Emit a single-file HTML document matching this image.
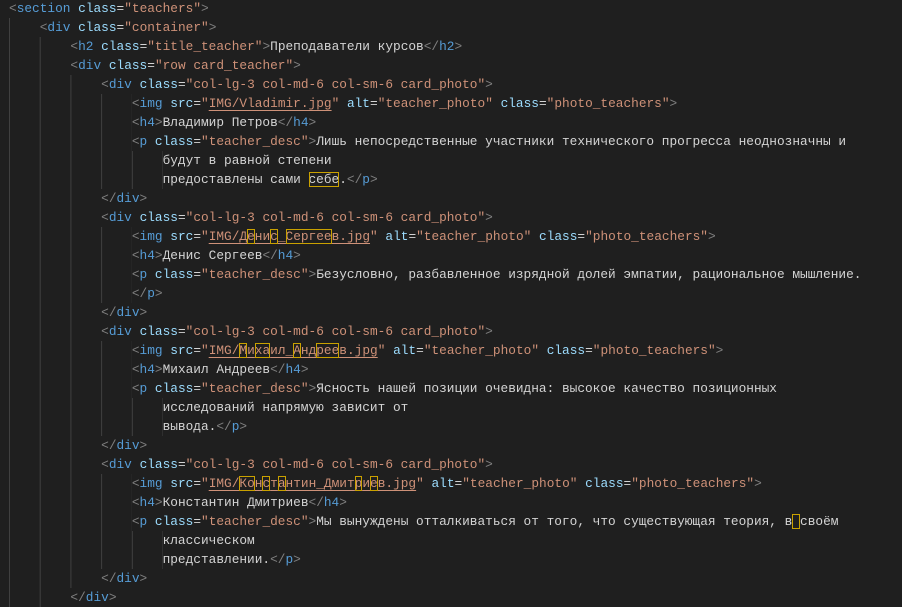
<!DOCTYPE html>
<html><head><meta charset="utf-8">
<style>
html,body{margin:0;padding:0;background:#1f1f1f;width:902px;height:594px;overflow:hidden}
#ed{position:absolute;left:9px;top:-1px;font-family:"Liberation Mono","DejaVu Sans Mono",monospace;font-size:12.8px;color:#d4d4d4;white-space:normal}
.l{height:19px;line-height:19px;position:relative;white-space:pre}
.g{display:inline-block;height:19px;vertical-align:top;background-image:linear-gradient(to right,#404040 0,#404040 1px,transparent 1px);background-size:4ch 19px;background-repeat:repeat-x;background-position:0 0}
.p{color:#808080}.t{color:#569cd6}.a{color:#9cdcfe}.s{color:#ce9178}
.u{text-decoration:underline;text-decoration-color:#ce9178;text-underline-offset:3px}
.b{outline:1px solid #c9a100;outline-offset:-1px}
</style></head><body>
<div id="ed"><div class="l"><span class="p">&lt;</span><span class="t">section</span> <span class="a">class</span>=<span class="s">"teachers"</span><span class="p">&gt;</span></div><div class="l"><span class="g" style="width:4ch"></span><span class="p">&lt;</span><span class="t">div</span> <span class="a">class</span>=<span class="s">"container"</span><span class="p">&gt;</span></div><div class="l"><span class="g" style="width:8ch"></span><span class="p">&lt;</span><span class="t">h2</span> <span class="a">class</span>=<span class="s">"title_teacher"</span><span class="p">&gt;</span>Преподаватели курсов<span class="p">&lt;/</span><span class="t">h2</span><span class="p">&gt;</span></div><div class="l"><span class="g" style="width:8ch"></span><span class="p">&lt;</span><span class="t">div</span> <span class="a">class</span>=<span class="s">"row card_teacher"</span><span class="p">&gt;</span></div><div class="l"><span class="g" style="width:12ch"></span><span class="p">&lt;</span><span class="t">div</span> <span class="a">class</span>=<span class="s">"col-lg-3 col-md-6 col-sm-6 card_photo"</span><span class="p">&gt;</span></div><div class="l"><span class="g" style="width:16ch"></span><span class="p">&lt;</span><span class="t">img</span> <span class="a">src</span>=<span class="s">"<span class="u">IMG/Vladimir.jpg</span>"</span> <span class="a">alt</span>=<span class="s">"teacher_photo"</span> <span class="a">class</span>=<span class="s">"photo_teachers"</span><span class="p">&gt;</span></div><div class="l"><span class="g" style="width:16ch"></span><span class="p">&lt;</span><span class="t">h4</span><span class="p">&gt;</span>Владимир Петров<span class="p">&lt;/</span><span class="t">h4</span><span class="p">&gt;</span></div><div class="l"><span class="g" style="width:16ch"></span><span class="p">&lt;</span><span class="t">p</span> <span class="a">class</span>=<span class="s">"teacher_desc"</span><span class="p">&gt;</span>Лишь непосредственные участники технического прогресса неоднозначны и</div><div class="l"><span class="g" style="width:20ch"></span>будут в равной степени</div><div class="l"><span class="g" style="width:20ch"></span>предоставлены сами <span class="b">себе</span>.<span class="p">&lt;/</span><span class="t">p</span><span class="p">&gt;</span></div><div class="l"><span class="g" style="width:12ch"></span><span class="p">&lt;/</span><span class="t">div</span><span class="p">&gt;</span></div><div class="l"><span class="g" style="width:12ch"></span><span class="p">&lt;</span><span class="t">div</span> <span class="a">class</span>=<span class="s">"col-lg-3 col-md-6 col-sm-6 card_photo"</span><span class="p">&gt;</span></div><div class="l"><span class="g" style="width:16ch"></span><span class="p">&lt;</span><span class="t">img</span> <span class="a">src</span>=<span class="s">"<span class="u">IMG/Д<span class="b">е</span>ни<span class="b">с</span>_<span class="b">Сергее</span>в.jpg</span>"</span> <span class="a">alt</span>=<span class="s">"teacher_photo"</span> <span class="a">class</span>=<span class="s">"photo_teachers"</span><span class="p">&gt;</span></div><div class="l"><span class="g" style="width:16ch"></span><span class="p">&lt;</span><span class="t">h4</span><span class="p">&gt;</span>Денис Сергеев<span class="p">&lt;/</span><span class="t">h4</span><span class="p">&gt;</span></div><div class="l"><span class="g" style="width:16ch"></span><span class="p">&lt;</span><span class="t">p</span> <span class="a">class</span>=<span class="s">"teacher_desc"</span><span class="p">&gt;</span>Безусловно, разбавленное изрядной долей эмпатии, рациональное мышление.</div><div class="l"><span class="g" style="width:16ch"></span><span class="p">&lt;/</span><span class="t">p</span><span class="p">&gt;</span></div><div class="l"><span class="g" style="width:12ch"></span><span class="p">&lt;/</span><span class="t">div</span><span class="p">&gt;</span></div><div class="l"><span class="g" style="width:12ch"></span><span class="p">&lt;</span><span class="t">div</span> <span class="a">class</span>=<span class="s">"col-lg-3 col-md-6 col-sm-6 card_photo"</span><span class="p">&gt;</span></div><div class="l"><span class="g" style="width:16ch"></span><span class="p">&lt;</span><span class="t">img</span> <span class="a">src</span>=<span class="s">"<span class="u">IMG/<span class="b">М</span>и<span class="b">ха</span>ил_<span class="b">А</span>нд<span class="b">рее</span>в.jpg</span>"</span> <span class="a">alt</span>=<span class="s">"teacher_photo"</span> <span class="a">class</span>=<span class="s">"photo_teachers"</span><span class="p">&gt;</span></div><div class="l"><span class="g" style="width:16ch"></span><span class="p">&lt;</span><span class="t">h4</span><span class="p">&gt;</span>Михаил Андреев<span class="p">&lt;/</span><span class="t">h4</span><span class="p">&gt;</span></div><div class="l"><span class="g" style="width:16ch"></span><span class="p">&lt;</span><span class="t">p</span> <span class="a">class</span>=<span class="s">"teacher_desc"</span><span class="p">&gt;</span>Ясность нашей позиции очевидна: высокое качество позиционных</div><div class="l"><span class="g" style="width:20ch"></span>исследований напрямую зависит от</div><div class="l"><span class="g" style="width:20ch"></span>вывода.<span class="p">&lt;/</span><span class="t">p</span><span class="p">&gt;</span></div><div class="l"><span class="g" style="width:12ch"></span><span class="p">&lt;/</span><span class="t">div</span><span class="p">&gt;</span></div><div class="l"><span class="g" style="width:12ch"></span><span class="p">&lt;</span><span class="t">div</span> <span class="a">class</span>=<span class="s">"col-lg-3 col-md-6 col-sm-6 card_photo"</span><span class="p">&gt;</span></div><div class="l"><span class="g" style="width:16ch"></span><span class="p">&lt;</span><span class="t">img</span> <span class="a">src</span>=<span class="s">"<span class="u">IMG/<span class="b">Ко</span>н<span class="b">с</span>т<span class="b">а</span>нтин_Дмит<span class="b">р</span>и<span class="b">е</span>в.jpg</span>"</span> <span class="a">alt</span>=<span class="s">"teacher_photo"</span> <span class="a">class</span>=<span class="s">"photo_teachers"</span><span class="p">&gt;</span></div><div class="l"><span class="g" style="width:16ch"></span><span class="p">&lt;</span><span class="t">h4</span><span class="p">&gt;</span>Константин Дмитриев<span class="p">&lt;/</span><span class="t">h4</span><span class="p">&gt;</span></div><div class="l"><span class="g" style="width:16ch"></span><span class="p">&lt;</span><span class="t">p</span> <span class="a">class</span>=<span class="s">"teacher_desc"</span><span class="p">&gt;</span>Мы вынуждены отталкиваться от того, что существующая теория, в<span class="b"> </span>своём</div><div class="l"><span class="g" style="width:20ch"></span>классическом</div><div class="l"><span class="g" style="width:20ch"></span>представлении.<span class="p">&lt;/</span><span class="t">p</span><span class="p">&gt;</span></div><div class="l"><span class="g" style="width:12ch"></span><span class="p">&lt;/</span><span class="t">div</span><span class="p">&gt;</span></div><div class="l"><span class="g" style="width:8ch"></span><span class="p">&lt;/</span><span class="t">div</span><span class="p">&gt;</span></div></div>
</body></html>
